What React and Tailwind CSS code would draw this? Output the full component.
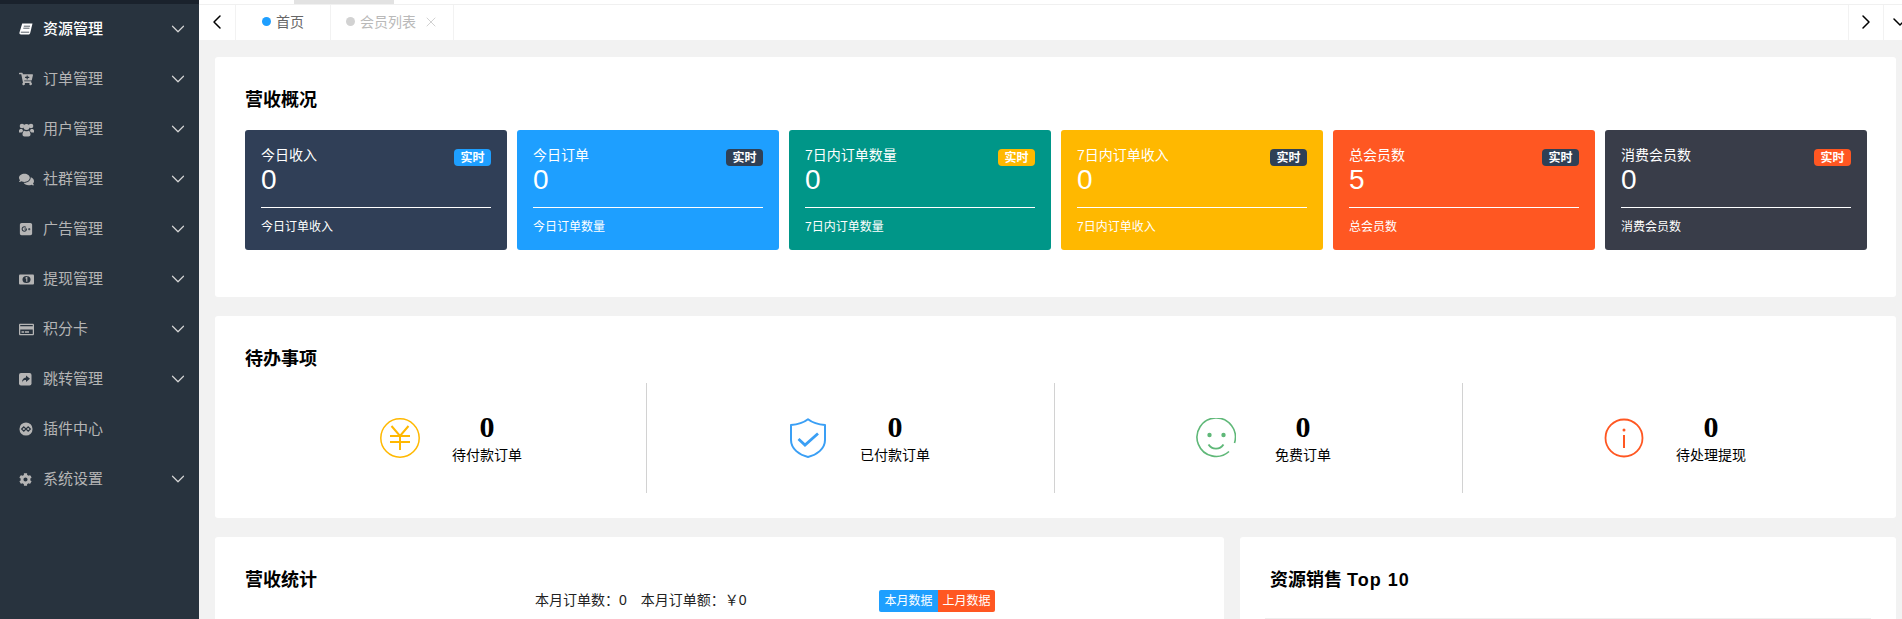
import { FaCartPlus, FaComments, FaRegCreditCard, FaCog } from 'react-icons/fa';
import { FaSquareGooglePlus } from 'react-icons/fa6';
import { ChevronDown, ChevronLeft, ChevronRight, X } from 'lucide-react';

const SIDEBAR_BG = '#28333e';

function BookIcon({ size }) {
  return (
    <svg width={size} height={size} viewBox="0 0 14 12" className="block">
      <path d="M3.200.5h10.300l-2.300 9.500c-.2.800-.8 1.500-1.800 1.500H2c-1.200 0-1.800-.9-1.500-2L3.200.5z" fill="currentColor" />
      <path d="M4.800 3.200h6.200M4.300 5.200h6.200M1.800 9.200h8.400" stroke={SIDEBAR_BG} strokeWidth=".8" fill="none" />
    </svg>
  );
}

function UsersIcon({ size }) {
  return (
    <svg width={size} height={size} viewBox="0 0 15 14" fill="currentColor" className="block">
      <circle cx="3" cy="3.500" r="2.300" />
      <circle cx="12" cy="3.500" r="2.300" />
      <path d="M0 10V8.200C0 7 .8 6.500 2.200 6.500h1c.3 1 .7 1.600 1.300 2.100-1 .5-1.600 1-1.900 1.400H0zM15 10V8.200c0-1.200-.8-1.700-2.200-1.700h-1c-.3 1-.7 1.600-1.300 2.100 1 .5 1.600 1 1.900 1.400H15z" />
      <circle cx="7.500" cy="4.500" r="3" />
      <path d="M3.500 12c0-2.500 1-3.800 2.300-3.800.5.400 1 .6 1.700.6s1.200-.2 1.700-.6c1.300 0 2.300 1.300 2.300 3.800 0 1.200-.8 2-2 2H5.500c-1.200 0-2-.8-2-2z" />
    </svg>
  );
}

function MoneyIcon({ size }) {
  return (
    <svg width={size} height={size} viewBox="0 0 15 15" className="block">
      <rect x="0" y="2.500" width="15" height="10" rx="1" fill="currentColor" />
      <ellipse cx="7.500" cy="7.500" rx="4" ry="3.600" fill={SIDEBAR_BG} />
      <path d="M6.500 6.200 7.800 5.400V9.800" stroke="currentColor" strokeWidth="1.100" fill="none" />
    </svg>
  );
}

function ShareIcon({ size }) {
  return (
    <svg width={size} height={size} viewBox="0 0 13 13" className="block">
      <rect width="12.500" height="12.500" rx="2" fill="currentColor" />
      <path d="M7 2.500 11 5.800 7 9V7c-2 0-3.300.6-4 2.500C3 6.500 4.500 4.700 7 4.500z" fill={SIDEBAR_BG} />
    </svg>
  );
}

function PluginIcon({ size }) {
  return (
    <svg width={size} height={size} viewBox="0 0 16 16" className="block">
      <circle cx="8" cy="8" r="7.500" fill="currentColor" />
      <path d="M5.500 5.500 8 8l-2.500 2.500L3 8zM10.500 5.500 13 8l-2.500 2.500L8 8z" fill="none" stroke={SIDEBAR_BG} strokeWidth="1.400" />
    </svg>
  );
}

const menus = [
  { label: '资源管理', icon: BookIcon, size: 14, active: true },
  { label: '订单管理', icon: FaCartPlus, size: 14 },
  { label: '用户管理', icon: UsersIcon, size: 15 },
  { label: '社群管理', icon: FaComments, size: 15 },
  { label: '广告管理', icon: FaSquareGooglePlus, size: 14 },
  { label: '提现管理', icon: MoneyIcon, size: 15 },
  { label: '积分卡', icon: FaRegCreditCard, size: 15 },
  { label: '跳转管理', icon: ShareIcon, size: 13 },
  { label: '插件中心', icon: PluginIcon, size: 14, noArrow: true },
  { label: '系统设置', icon: FaCog, size: 13 },
];

const stats = [
  { title: '今日收入', value: '0', foot: '今日订单收入', bg: 'bg-[#303f57]', badge: 'bg-[#1e9fff]' },
  { title: '今日订单', value: '0', foot: '今日订单数量', bg: 'bg-[#1e9fff]', badge: 'bg-[#2f4056]' },
  { title: '7日内订单数量', value: '0', foot: '7日内订单数量', bg: 'bg-[#009688]', badge: 'bg-[#ffb800]' },
  { title: '7日内订单收入', value: '0', foot: '7日内订单收入', bg: 'bg-[#ffb800]', badge: 'bg-[#2f4056]' },
  { title: '总会员数', value: '5', foot: '总会员数', bg: 'bg-[#ff5722]', badge: 'bg-[#2f4056]' },
  { title: '消费会员数', value: '0', foot: '消费会员数', bg: 'bg-[#393d49]', badge: 'bg-[#ff5722]' },
];

function YenIcon() {
  return (
    <svg width="40" height="40" viewBox="0 0 40 40" fill="none" stroke="#ffb800" className="block">
      <circle cx="20" cy="20" r="19.200" strokeWidth="1.500" />
      <path d="M11.500 8 20 18 28.500 8M10 18h20M10 24h20M20 18V32" strokeWidth="2" />
    </svg>
  );
}

function ShieldIcon() {
  return (
    <svg width="40" height="40" viewBox="0 0 40 40" fill="none" stroke="#3a9ff5" className="block">
      <path d="M20 1.200c4.500 3.500 10 5.300 17 5.800v15c0 9-8.500 15-17 17-8.500-2-17-8-17-17V7c7-.5 12.500-2.300 17-5.800z" strokeWidth="2" strokeLinejoin="round" />
      <path d="M10.500 21l6.500 6 13-11.500" strokeWidth="2.800" />
    </svg>
  );
}

function SmileIcon() {
  return (
    <svg width="40" height="40" viewBox="0 0 40 40" fill="none" stroke="#5fb878" className="block">
      <path d="M33 33.500A19.200 19.200 0 1 1 38.500 25" strokeWidth="1.600" />
      <circle cx="13.500" cy="17" r="2.200" fill="#5fb878" stroke="none" />
      <circle cx="27.500" cy="17" r="2.200" fill="#5fb878" stroke="none" />
      <path d="M12.500 26.500c3.500 5.500 11.500 5.500 15 0" strokeWidth="1.800" />
    </svg>
  );
}

function InfoIcon() {
  return (
    <svg width="40" height="40" viewBox="0 0 40 40" fill="none" stroke="#ff5722" className="block">
      <circle cx="20" cy="20" r="18.500" strokeWidth="1.800" />
      <circle cx="20" cy="12" r="1.500" fill="#ff5722" stroke="none" />
      <path d="M20 17V30" strokeWidth="2" />
    </svg>
  );
}

const todos = [
  { label: '待付款订单', icon: YenIcon },
  { label: '已付款订单', icon: ShieldIcon },
  { label: '免费订单', icon: SmileIcon },
  { label: '待处理提现', icon: InfoIcon },
];

function Sidebar() {
  return (
    <aside className="w-[199px] shrink-0 bg-[#28333e]">
      <div className="h-1 bg-[#1a222c]"></div>
      {menus.map(m => {
        const Icon = m.icon;
        return (
          <div key={m.label} className={`flex h-[50px] items-center pl-[19px] pr-[10px] text-[15px] ${m.active ? 'font-medium text-white' : 'text-[#b5b5b5]'}`}>
            <span className="flex w-[24px] shrink-0 items-center"><Icon size={m.size} /></span>
            <span className="flex-1">{m.label}</span>
            {!m.noArrow && <ChevronDown size={22} strokeWidth={1.3} className="text-[#d5d5d5]" />}
          </div>
        );
      })}
    </aside>
  );
}

function TabBar() {
  return (
    <div className="relative shrink-0 bg-white pt-1">
      <div className="absolute left-[95px] top-0 h-1 w-[100px] bg-[#e2e2e2]"></div>
      <div className="flex h-9 items-center border-t border-[#f0f0f0] text-sm">
        <div className="flex h-full w-[37px] items-center justify-center border-r border-[#f2f2f2] pb-[2px]">
          <ChevronLeft size={24} strokeWidth={1.5} className="text-black" />
        </div>
        <div className="flex h-full w-[95px] items-center justify-center gap-[5px] border-r border-[#f2f2f2] pb-[2px] text-[#666666]">
          <span className="h-[9px] w-[9px] rounded-full bg-[#1e9fff]"></span>首页
        </div>
        <div className="flex h-full w-[123px] items-center gap-[5px] border-r border-[#f2f2f2] pb-[2px] pl-[15px] text-[#b9b9b9]">
          <span className="h-[9px] w-[9px] rounded-full bg-[#d2d2d2]"></span>会员列表
          <X size={16} strokeWidth={1} className="ml-[2px] text-[#b9b9b9]" />
        </div>
        <div className="flex-1"></div>
        <div className="flex h-full w-[35px] items-center justify-center border-l border-[#f2f2f2] pb-[2px]">
          <ChevronRight size={24} strokeWidth={1.5} className="text-black" />
        </div>
        <div className="flex h-full w-[19px] items-center border-l border-[#f2f2f2] pb-[2px] pl-[4px]">
          <ChevronDown size={24} strokeWidth={1.5} className="shrink-0 text-black" />
        </div>
      </div>
    </div>
  );
}

function Overview() {
  return (
    <section className="h-[240px] rounded-[3px] bg-white pl-[30px] pr-[29px] pt-[31px]">
      <h2 className="text-lg leading-6 font-bold text-black">营收概况</h2>
      <div className="mt-[18px] flex gap-[10px]">
        {stats.map(s => (
          <div key={s.title} className={`h-[120px] w-[262px] shrink-0 rounded-[3px] px-4 pt-[15px] text-white ${s.bg}`}>
            <div className="flex items-start justify-between">
              <div className="text-sm leading-5">{s.title}</div>
              <span className={`mt-[4px] flex h-[17px] w-[37px] items-center justify-center rounded-sm text-xs font-bold ${s.badge}`}>实时</span>
            </div>
            <div className="mt-[-4px] h-[36px] text-[28px] leading-[36px]">{s.value}</div>
            <div className="mt-[9px] border-t border-white pt-[9px] text-xs leading-[20px]">{s.foot}</div>
          </div>
        ))}
      </div>
    </section>
  );
}

function Todo() {
  return (
    <section className="mt-[19px] h-[202px] rounded-[3px] bg-white pl-[24px] pt-[31px]">
      <h2 className="ml-[6px] text-lg leading-6 font-bold text-black">待办事项</h2>
      <div className="mt-[12px] flex">
        {todos.map((t, i) => {
          const Icon = t.icon;
          return (
            <div key={t.label} className={`flex h-[110px] w-[408px] pl-[141px] pt-[35px] ${i < 3 ? 'border-r border-[#d2d2d2]' : ''}`}>
              <Icon />
              <div className="w-[134px] text-center text-black">
                <div className="mt-[-7px] font-['Liberation_Serif',serif] text-[30px] leading-8 font-bold">0</div>
                <div className="mt-[2px] text-sm leading-5">{t.label}</div>
              </div>
            </div>
          );
        })}
      </div>
    </section>
  );
}

function BottomRow() {
  return (
    <div className="mt-[19px] flex gap-4">
      <section className="h-[200px] w-[1009px] rounded-[3px] bg-white pl-[30px] pt-[31px]">
        <h2 className="text-lg leading-6 font-bold text-black">营收统计</h2>
        <div className="mt-[-2px] flex items-center">
          <div className="mb-[2px] ml-[290px] flex w-[344px] gap-[14px] text-sm leading-5 text-[#222222]">
            <span>本月订单数：0</span>
            <span>本月订单额：￥0</span>
          </div>
          <div className="flex text-xs text-white">
            <span className="flex h-[22px] w-[59px] items-center justify-center rounded-l-[2px] bg-[#1e9fff]">本月数据</span>
            <span className="flex h-[22px] w-[57px] items-center justify-center rounded-r-[2px] bg-[#ff5722]">上月数据</span>
          </div>
        </div>
      </section>
      <section className="h-[200px] w-[656px] rounded-[3px] bg-white px-[25px] pt-[31px]">
        <h2 className="ml-[5px] text-lg leading-6 font-bold text-black">资源销售 <span className="tracking-[1px]">Top 10</span></h2>
        <div className="mt-[26px] border-t border-[#eeeeee]"></div>
      </section>
    </div>
  );
}

export default function App() {
  return (
    <div className="flex h-[619px] w-[1902px] overflow-hidden bg-[#f2f2f2] font-['Liberation_Sans','Noto_Sans_CJK_SC',sans-serif]">
      <Sidebar />
      <div className="flex min-w-0 flex-1 flex-col">
        <TabBar />
        <main className="overflow-hidden pl-[16px] pr-[6px] pt-[17px]">
          <Overview />
          <Todo />
          <BottomRow />
        </main>
      </div>
    </div>
  );
}
